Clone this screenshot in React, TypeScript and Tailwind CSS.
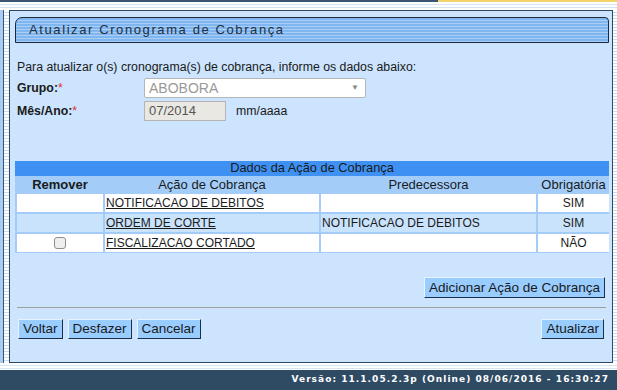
import React from 'react';

type Row = {
  remover: boolean;
  acao: string;
  predecessora: string;
  obrigatoria: string;
  alt: boolean;
};

const rows: Row[] = [
  { remover: false, acao: 'NOTIFICACAO DE DEBITOS', predecessora: '', obrigatoria: 'SIM', alt: false },
  { remover: false, acao: 'ORDEM DE CORTE', predecessora: 'NOTIFICACAO DE DEBITOS', obrigatoria: 'SIM', alt: true },
  { remover: true, acao: 'FISCALIZACAO CORTADO', predecessora: '', obrigatoria: 'NÃO', alt: false },
];

const Button: React.FC<{ label: string; className?: string }> = ({ label, className }) => (
  <button
    type="button"
    className={`h-[20px] bg-[#99ccff] border border-t-[#e8f3ff] border-l-[#e8f3ff] border-r-[#1c2f44] border-b-[#1c2f44] px-[4px] text-[13.5px] leading-none text-[#1a1a1a] ${className ?? ''}`}
  >
    {label}
  </button>
);

const App: React.FC = () => {
  return (
    <div className="w-[617px] h-[390px] flex flex-col bg-white overflow-hidden font-['Liberation_Sans',Arial,sans-serif] text-[12.3px] text-[#1a1a1a]">
      {/* top strip */}
      <div className="h-[10px] flex flex-col">
        <div className="h-[2px] flex">
          <div className="w-[438px] bg-[#3a5673]" />
          <div className="flex-1 bg-[#f2d36a]" />
        </div>
        <div className="flex-1 bg-[repeating-linear-gradient(to_bottom,#ffffff_0,#ffffff_2px,#d3e4f5_2px,#d3e4f5_3px)]" />
      </div>

      {/* middle */}
      <div className="h-[353px] flex">
        <div className="w-[9px] flex">
          <div className="w-[3px] bg-[#a9cdf2]" />
          <div className="w-[1px] bg-[#3a5673]" />
          <div className="flex-1 bg-[repeating-linear-gradient(to_bottom,#ffffff_0,#ffffff_2px,#c3dbf3_2px,#c3dbf3_3px)]" />
        </div>

        <div className="w-[604px] border border-[#2f4963] bg-[#cce4fd] flex flex-col pl-[5px] pr-[3px] pt-[6px]">
          {/* title bar */}
          <div className="h-[26px] border border-[#1c2b3b] rounded-tl-[7px] rounded-tr-[4px] bg-[repeating-linear-gradient(to_bottom,#80b6ef_0,#80b6ef_2px,#a9cdf5_2px,#a9cdf5_3px)] flex items-center pl-[13px]">
            <span className="text-[13px] tracking-[1.6px] text-[#1d2e40]">Atualizar Cronograma de Cobrança</span>
          </div>

          <div className="pl-[2px] pt-[17px] leading-[15px]">Para atualizar o(s) cronograma(s) de cobrança, informe os dados abaixo:</div>

          <div className="flex items-center h-[20px] mt-[3px] pl-[2px]">
            <div className="w-[127px] font-bold">Grupo:<span className="text-[#d33] font-normal">*</span></div>
            <div className="w-[222px] h-[20px] bg-white border border-[#b5b5b5] rounded-[2px] flex items-center justify-between pl-[4px] pr-[6px]">
              <span className="text-[14px] text-[#999]">ABOBORA</span>
              <span className="text-[8px] text-[#888]">▼</span>
            </div>
          </div>

          <div className="flex items-center h-[20px] mt-[3px] pl-[2px]">
            <div className="w-[127px] font-bold">Mês/Ano:<span className="text-[#d33] font-normal">*</span></div>
            <div className="w-[82px] h-[20px] bg-[#e9e8e3] border border-[#b5b5b5] flex items-center pl-[4px] text-[13px] text-[#555]">07/2014</div>
            <span className="ml-[10px]">mm/aaaa</span>
          </div>

          {/* table */}
          <div className="mt-[40px] w-[594px]">
            <div className="h-[15px] bg-[#3e91f2] flex items-center justify-center text-[12.8px] leading-none">Dados da Ação de Cobrança</div>
            <div className="bg-[#a3cdf8] grid grid-cols-[86px_214px_215px_71px] gap-[2px] p-[1px] pl-[2px] text-[12px]">
              <div className="h-[15px] flex items-center justify-center font-bold text-[13px]">Remover</div>
              <div className="h-[15px] flex items-center justify-center text-[13px]">Ação de Cobrança</div>
              <div className="h-[15px] flex items-center justify-center text-[13px]">Predecessora</div>
              <div className="h-[15px] flex items-center justify-center text-[13px]">Obrigatória</div>
              {rows.map((r, i) => {
                const cell = r.alt ? 'bg-[#cae3fc]' : 'bg-white';
                return (
                  <React.Fragment key={i}>
                    <div className={`h-[18px] flex items-center justify-center ${cell}`}>
                      {r.remover && <div className="w-[12px] h-[12px] rounded-[3px] border border-[#8d8d8d] bg-[#efefef]" />}
                    </div>
                    <div className={`h-[18px] flex items-center pl-[1px] ${cell}`}>
                      <span className="underline">{r.acao}</span>
                    </div>
                    <div className={`h-[18px] flex items-center pl-[1px] ${cell}`}>{r.predecessora}</div>
                    <div className={`h-[18px] flex items-center justify-center ${cell}`}>{r.obrigatoria}</div>
                  </React.Fragment>
                );
              })}
            </div>
          </div>

          <div className="flex justify-end mt-[24px] pr-[4px]">
            <Button label="Adicionar Ação de Cobrança" className="h-[21px] px-[4px]" />
          </div>

          <div className="mt-[9px] ml-[2px] mr-[3px] h-[1px] bg-[#9e9e9e]" />

          <div className="flex items-center mt-[11px] pl-[3px] pr-[5px]">
            <div className="flex gap-[5px]">
              <Button label="Voltar" />
              <Button label="Desfazer" />
              <Button label="Cancelar" />
            </div>
            <div className="flex-1" />
            <Button label="Atualizar" />
          </div>
        </div>

        <div className="flex-1 bg-[repeating-linear-gradient(to_bottom,#ffffff_0,#ffffff_2px,#c3dbf3_2px,#c3dbf3_3px)]" />
      </div>

      {/* bottom */}
      <div className="h-[7px] bg-[repeating-linear-gradient(to_bottom,#ffffff_0,#ffffff_2px,#d3e4f5_2px,#d3e4f5_3px)]" />
      <div className="flex-1 bg-[#2f4a63] flex items-center justify-end pr-[8px]">
        <span className="font-['DejaVu_Sans',Verdana,sans-serif] font-bold text-[9px] tracking-[1.05px] text-white">Versão: 11.1.05.2.3p (Online) 08/06/2016 - 16:30:27</span>
      </div>
    </div>
  );
};

export default App;
